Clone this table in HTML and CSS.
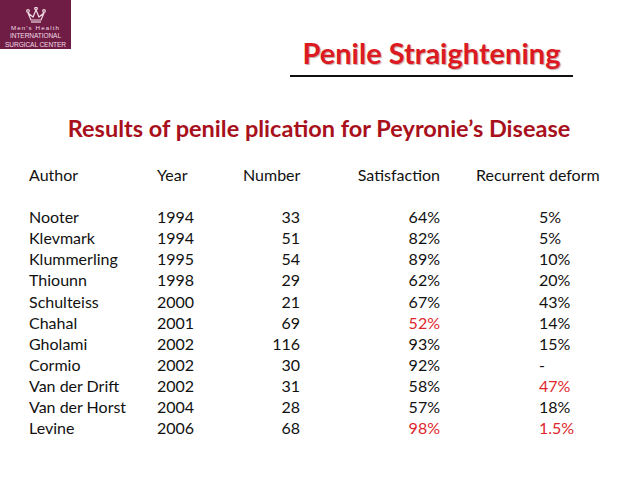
FILE: index.html
```html
<!DOCTYPE html>
<html>
<head>
<meta charset="utf-8">
<link rel="stylesheet" href="styles.css">
</head>
<body>
<div class="slide">
  <header class="top">
    <div class="logo">
      <svg class="crown" width="22" height="16" viewBox="0 0 22 16">
        <g fill="none" stroke="#f1dbe4" stroke-width="1.2">
          <path d="M3 6 L6 13 H16 L19 6 L14 10 L11 3 L8 10 Z"/>
          <circle cx="3" cy="4" r="1.3"/>
          <circle cx="11" cy="1.6" r="1.3"/>
          <circle cx="19" cy="4" r="1.3"/>
          <path d="M6 15 H16"/>
        </g>
      </svg>
      <div class="l1">Men's Health</div>
      <div class="l2">INTERNATIONAL</div>
      <div class="l2">SURGICAL CENTER</div>
    </div>
    <div class="title-wrap">
      <h1 class="title">Penile Straightening</h1>
      <div class="rule"></div>
    </div>
  </header>
  <h2 class="subtitle">Results of penile plication for Peyronie’s Disease</h2>
  <div class="table">
    <div class="c">Author</div><div class="c">Year</div><div class="c r">Number</div><div class="c r">Satisfaction</div><div class="c h5">Recurrent deform</div>
    <div class="blank"></div>
    <div class="c">Nooter</div><div class="c">1994</div><div class="c r">33</div><div class="c r">64%</div><div class="c v5">5%</div>
    <div class="c">Klevmark</div><div class="c">1994</div><div class="c r">51</div><div class="c r">82%</div><div class="c v5">5%</div>
    <div class="c">Klummerling</div><div class="c">1995</div><div class="c r">54</div><div class="c r">89%</div><div class="c v5">10%</div>
    <div class="c">Thiounn</div><div class="c">1998</div><div class="c r">29</div><div class="c r">62%</div><div class="c v5">20%</div>
    <div class="c">Schulteiss</div><div class="c">2000</div><div class="c r">21</div><div class="c r">67%</div><div class="c v5">43%</div>
    <div class="c">Chahal</div><div class="c">2001</div><div class="c r">69</div><div class="c r red">52%</div><div class="c v5">14%</div>
    <div class="c">Gholami</div><div class="c">2002</div><div class="c r">116</div><div class="c r">93%</div><div class="c v5">15%</div>
    <div class="c">Cormio</div><div class="c">2002</div><div class="c r">30</div><div class="c r">92%</div><div class="c v5">-</div>
    <div class="c">Van der Drift</div><div class="c">2002</div><div class="c r">31</div><div class="c r">58%</div><div class="c v5 red">47%</div>
    <div class="c">Van der Horst</div><div class="c">2004</div><div class="c r">28</div><div class="c r">57%</div><div class="c v5">18%</div>
    <div class="c">Levine</div><div class="c">2006</div><div class="c r">68</div><div class="c r red">98%</div><div class="c v5 red">1.5%</div>
  </div>
</div>
</body>
</html>
```

FILE: styles.css
```css
html, body {
  margin: 0;
  padding: 0;
  background: #ffffff;
}
.slide {
  width: 638px;
  height: 479px;
  font-family: "Lato", "Open Sans", sans-serif;
  color: #111;
}
.top {
  display: flex;
  height: 84px;
}
.logo {
  width: 71px;
  height: 49px;
  background: #6f1d44;
  color: #f1dbe4;
  display: flex;
  flex-direction: column;
  align-items: center;
  padding-top: 7px;
  box-sizing: border-box;
  font-family: "Liberation Sans", sans-serif;
  line-height: 8px;
}
.crown {
  margin-bottom: 1px;
}
.l1 {
  font-size: 6.2px;
  letter-spacing: 1.1px;
}
.l2 {
  font-size: 6.6px;
  letter-spacing: -0.1px;
  line-height: 8.5px;
}
.title-wrap {
  margin-left: 219px;
  padding-top: 35px;
  display: flex;
  flex-direction: column;
  align-items: center;
  width: 283px;
}
.title {
  margin: 0;
  font-size: 29px;
  font-weight: 700;
  line-height: 36px;
  color: #dc1a22;
  text-shadow: 1px 1px 1px rgba(90, 0, 0, 0.35);
  white-space: nowrap;
}
.rule {
  margin-top: 4px;
  width: 283px;
  height: 2px;
  background: #111;
}
.subtitle {
  margin: 29px 0 0 0;
  text-align: center;
  font-size: 23.5px;
  font-weight: 700;
  line-height: 30px;
  color: #a8101c;
  white-space: nowrap;
}
.table {
  margin-top: 21px;
  padding-left: 29px;
  display: grid;
  grid-template-columns: 128px 86px 57px 140px 160px;
  grid-auto-rows: 21.1px;
  font-size: 16px;
  line-height: 21px;
  color: #111;
}
.blank {
  grid-column: 1 / -1;
}
.c {
  white-space: nowrap;
}
.r {
  text-align: right;
}
.h5 {
  padding-left: 36px;
}
.v5 {
  padding-left: 99px;
}
.red {
  color: #e0252c;
}
```
